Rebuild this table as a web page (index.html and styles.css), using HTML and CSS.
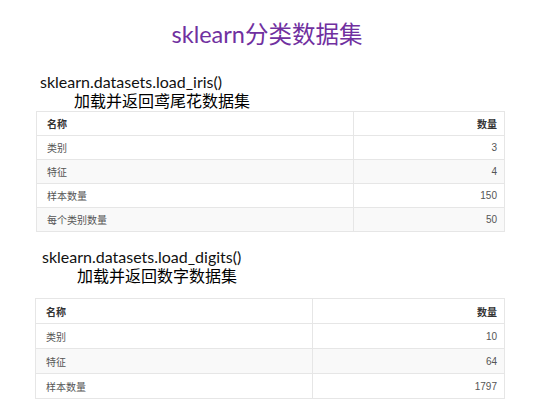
FILE: index.html
```html
<!DOCTYPE html>
<html lang="zh">
<head>
<meta charset="utf-8">
<link rel="stylesheet" href="styles.css">
</head>
<body>
<h1 class="title">sklearn分类数据集</h1>

<section class="block block-iris">
  <div class="fn">sklearn.datasets.load_iris()</div>
  <div class="desc">加载并返回鸢尾花数据集</div>
  <table class="tbl tbl-iris">
    <thead><tr><th>名称</th><th class="num">数量</th></tr></thead>
    <tbody>
      <tr><td>类别</td><td class="num">3</td></tr>
      <tr><td>特征</td><td class="num">4</td></tr>
      <tr><td>样本数量</td><td class="num">150</td></tr>
      <tr><td>每个类别数量</td><td class="num">50</td></tr>
    </tbody>
  </table>
</section>

<section class="block block-digits">
  <div class="fn">sklearn.datasets.load_digits()</div>
  <div class="desc">加载并返回数字数据集</div>
  <table class="tbl tbl-digits">
    <thead><tr><th>名称</th><th class="num">数量</th></tr></thead>
    <tbody>
      <tr><td>类别</td><td class="num">10</td></tr>
      <tr><td>特征</td><td class="num">64</td></tr>
      <tr><td>样本数量</td><td class="num">1797</td></tr>
    </tbody>
  </table>
</section>
</body>
</html>
```
FILE: styles.css
```css
html, body {
  margin: 0;
  padding: 0;
  background: #fff;
}
body {
  width: 548px;
  height: 409px;
  overflow: hidden;
  font-family: "Lato", "Noto Sans CJK SC", sans-serif;
  color: #000;
}
.title {
  margin: 0;
  padding-top: 19px;
  padding-right: 14px;
  text-align: center;
  font-weight: normal;
  font-size: 23.5px;
  line-height: 30px;
  color: #7030a0;
}
.block {
  display: flex;
  flex-direction: column;
}
.block-iris {
  margin-top: 23px;
}
.block-digits {
  margin-top: 15px;
}
.fn {
  font-size: 16px;
  font-weight: 400;
  color: #111;
  line-height: 19px;
  padding-left: 40px;
}
.block-digits .fn {
  padding-left: 42px;
}
.desc {
  font-family: "Noto Sans CJK SC", sans-serif;
  font-size: 16px;
  line-height: 18px;
  padding-left: 74px;
}
.block-digits .desc {
  padding-left: 77px;
}
.tbl {
  border-collapse: collapse;
  font-family: "Liberation Sans", "Noto Sans CJK SC", sans-serif;
  font-size: 10px;
  color: #555;
}
.tbl-iris {
  margin-left: 36px;
  margin-top: 2px;
  width: 469px;
}
.tbl-digits {
  margin-left: 35px;
  margin-top: 14px;
  width: 470px;
}
.tbl th, .tbl td {
  border: 1px solid #e6e6e6;
  padding: 0 7px 0 10px;
  text-align: left;
}
.tbl-iris th, .tbl-iris td { height: 23px; }
.tbl-digits th, .tbl-digits td { height: 24px; }
.tbl th {
  font-weight: bold;
  color: #333;
}
.tbl-iris th:first-child { width: 299px; }
.tbl-digits th:first-child { width: 259px; }
.tbl .num { text-align: right; }
.tbl tbody tr:nth-child(even) { background: #f9f9f9; }
```
